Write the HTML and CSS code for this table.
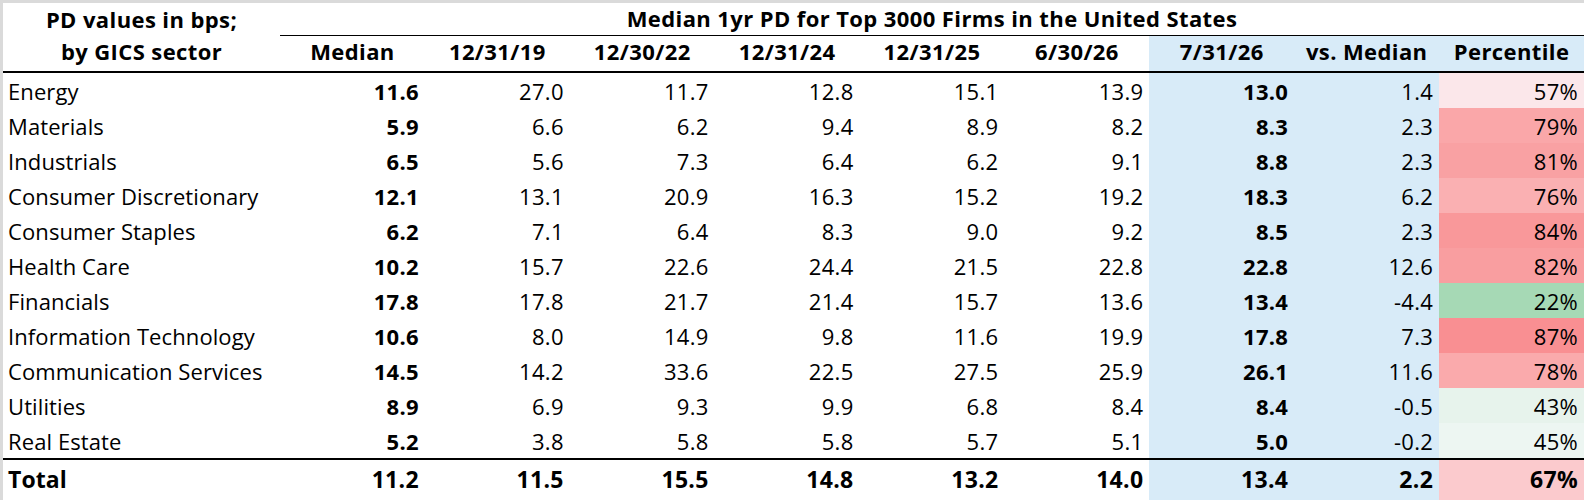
FILE: index.html
```html
<!DOCTYPE html>
<html lang="en">
<head>
<meta charset="utf-8">
<title>Median 1yr PD for Top 3000 Firms in the United States</title>
<link rel="stylesheet" href="styles.css">
</head>
<body>
<div class="frame">
<table class="pd">
  <colgroup>
    <col class="c-sector">
    <col class="c-num"><col class="c-num"><col class="c-num"><col class="c-num"><col class="c-num">
    <col class="c-num"><col class="c-num"><col class="c-num"><col class="c-num">
  </colgroup>
  <thead>
    <tr class="h1">
      <th class="lbl">PD values in bps;</th>
      <th class="title" colspan="9">Median 1yr PD for Top 3000 Firms in the United States</th>
    </tr>
    <tr class="h2">
      <th class="lbl">by GICS sector</th>
      <th>Median</th>
      <th>12/31/19</th>
      <th>12/30/22</th>
      <th>12/31/24</th>
      <th>12/31/25</th>
      <th>6/30/26</th>
      <th class="hl">7/31/26</th>
      <th class="hl">vs. Median</th>
      <th class="hl">Percentile</th>
    </tr>
  </thead>
  <tbody>
    <tr><td class="name">Energy</td><td class="b">11.6</td><td>27.0</td><td>11.7</td><td>12.8</td><td>15.1</td><td>13.9</td><td class="hl b">13.0</td><td class="hl">1.4</td><td style="background:#fbe7ea">57%</td></tr>
    <tr><td class="name">Materials</td><td class="b">5.9</td><td>6.6</td><td>6.2</td><td>9.4</td><td>8.9</td><td>8.2</td><td class="hl b">8.3</td><td class="hl">2.3</td><td style="background:#faa7a9">79%</td></tr>
    <tr><td class="name">Industrials</td><td class="b">6.5</td><td>5.6</td><td>7.3</td><td>6.4</td><td>6.2</td><td>9.1</td><td class="hl b">8.8</td><td class="hl">2.3</td><td style="background:#f9a1a3">81%</td></tr>
    <tr><td class="name">Consumer Discretionary</td><td class="b">12.1</td><td>13.1</td><td>20.9</td><td>16.3</td><td>15.2</td><td>19.2</td><td class="hl b">18.3</td><td class="hl">6.2</td><td style="background:#fab0b2">76%</td></tr>
    <tr><td class="name">Consumer Staples</td><td class="b">6.2</td><td>7.1</td><td>6.4</td><td>8.3</td><td>9.0</td><td>9.2</td><td class="hl b">8.5</td><td class="hl">2.3</td><td style="background:#f9989a">84%</td></tr>
    <tr><td class="name">Health Care</td><td class="b">10.2</td><td>15.7</td><td>22.6</td><td>24.4</td><td>21.5</td><td>22.8</td><td class="hl b">22.8</td><td class="hl">12.6</td><td style="background:#f99ea0">82%</td></tr>
    <tr><td class="name">Financials</td><td class="b">17.8</td><td>17.8</td><td>21.7</td><td>21.4</td><td>15.7</td><td>13.6</td><td class="hl b">13.4</td><td class="hl">-4.4</td><td style="background:#a6d9b5">22%</td></tr>
    <tr><td class="name">Information Technology</td><td class="b">10.6</td><td>8.0</td><td>14.9</td><td>9.8</td><td>11.6</td><td>19.9</td><td class="hl b">17.8</td><td class="hl">7.3</td><td style="background:#f98f92">87%</td></tr>
    <tr><td class="name">Communication Services</td><td class="b">14.5</td><td>14.2</td><td>33.6</td><td>22.5</td><td>27.5</td><td>25.9</td><td class="hl b">26.1</td><td class="hl">11.6</td><td style="background:#faaaac">78%</td></tr>
    <tr><td class="name">Utilities</td><td class="b">8.9</td><td>6.9</td><td>9.3</td><td>9.9</td><td>6.8</td><td>8.4</td><td class="hl b">8.4</td><td class="hl">-0.5</td><td style="background:#e7f3ec">43%</td></tr>
    <tr class="last"><td class="name">Real Estate</td><td class="b">5.2</td><td>3.8</td><td>5.8</td><td>5.8</td><td>5.7</td><td>5.1</td><td class="hl b">5.0</td><td class="hl">-0.2</td><td style="background:#edf6f2">45%</td></tr>
  </tbody>
  <tfoot>
    <tr class="total"><td class="name">Total</td><td>11.2</td><td>11.5</td><td>15.5</td><td>14.8</td><td>13.2</td><td>14.0</td><td class="hl">13.4</td><td class="hl">2.2</td><td style="background:#fbcacd">67%</td></tr>
  </tfoot>
</table>
</div>
</body>
</html>
```
FILE: styles.css
```css
html, body {
  margin: 0;
  padding: 0;
  background: #ffffff;
}

.frame {
  width: 1581px;
  height: 497px;
  border-top: 3px solid #dadada;
  border-left: 3px solid #dadada;
  background: #ffffff;
}

.pd {
  width: 1581px;
  table-layout: fixed;
  border-collapse: separate;
  border-spacing: 0;
  font-family: "Open Sans", "Liberation Sans", sans-serif;
  font-size: 22px;
  color: #000000;
}

.c-sector { width: 277px; }
.c-num { width: 144.9px; }

.pd th,
.pd td {
  padding: 0;
  white-space: nowrap;
  overflow: hidden;
}

.pd th {
  font-weight: 700;
  text-align: center;
  vertical-align: bottom;
  letter-spacing: 0.4px;
}

.h1 th {
  height: 33px;
  line-height: 30px;
  padding-bottom: 2px;
  box-sizing: border-box;
}

.h1 th.title {
  border-bottom: 1px solid #000000;
}

.h2 th {
  height: 37px;
  line-height: 30px;
  padding-bottom: 5px;
  border-bottom: 2px solid #000000;
  box-sizing: border-box;
}

.pd td {
  height: 35px;
  line-height: 33px;
  padding-top: 2px;
  text-align: right;
  padding-right: 6px;
  box-sizing: border-box;
  vertical-align: top;
  letter-spacing: 0.3px;
}

.pd td.name {
  text-align: left;
  padding-left: 5px;
  padding-right: 0;
  letter-spacing: 0.1px;
}

.pd .b { font-weight: 700; }

.pd .hl { background: #d8ebf8; }

.pd tr.last td {
  border-bottom: 2px solid #000000;
}

.pd tr.total td {
  height: 40px;
  line-height: 34px;
  padding-top: 2px;
  font-weight: 700;
  font-size: 23px;
}
```
